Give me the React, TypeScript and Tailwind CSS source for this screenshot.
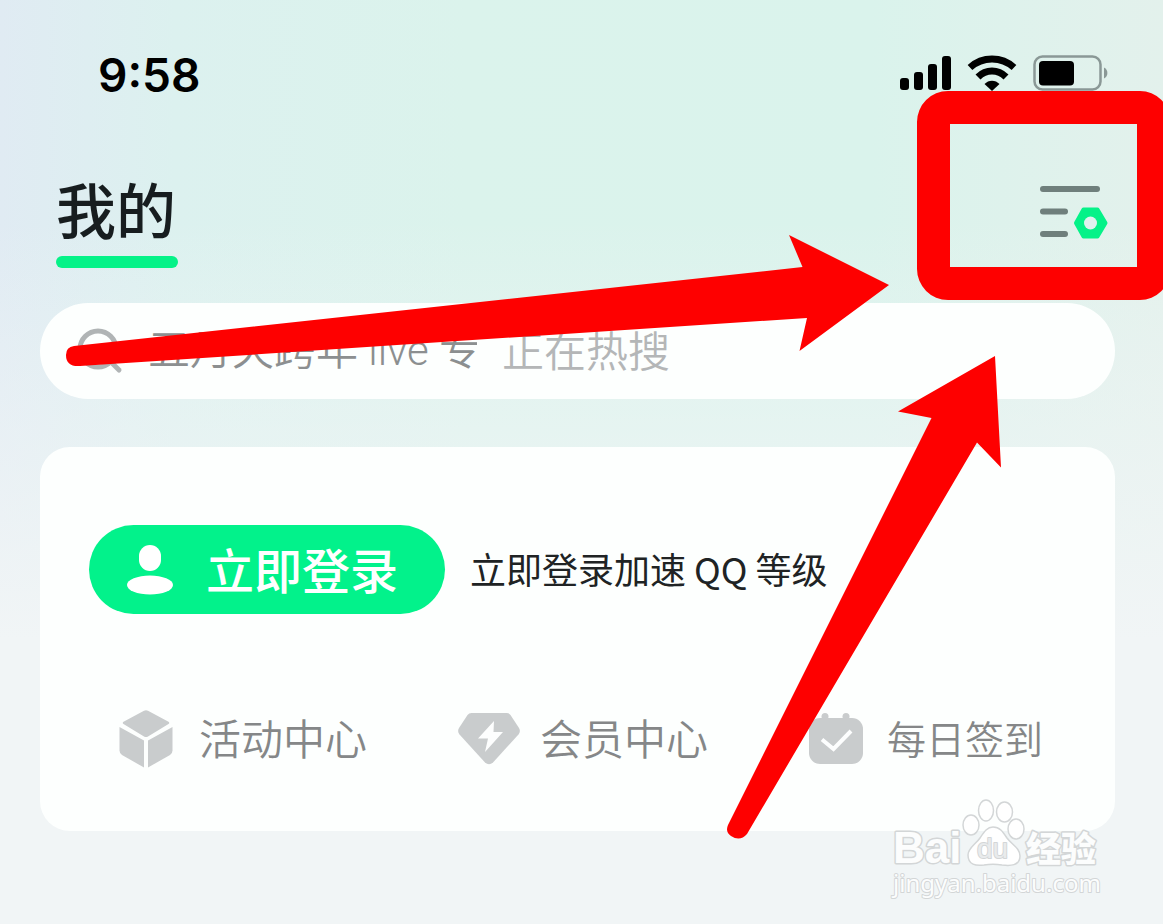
import type { ReactNode } from 'react';

type Shortcut = {
  label: string;
  icon: ReactNode;
  className: string;
};

function SignalIcon() {
  return (
    <svg viewBox="0 0 52 36" className="h-9 w-[52px]" fill="#000" aria-hidden="true">
      <rect x="1" y="23" width="9" height="12" rx="3" />
      <rect x="15" y="17" width="9" height="18" rx="3" />
      <rect x="29" y="9" width="9" height="26" rx="3" />
      <rect x="43" y="1" width="9" height="34" rx="3" />
    </svg>
  );
}

function WifiIcon() {
  return (
    <svg viewBox="0 0 50 36" className="h-9 w-[50px]" fill="none" stroke="#000" aria-hidden="true">
      <path d="M3 12.500C15.500 1.200 34.500 1.200 47 12.500" strokeWidth="7" />
      <path d="M11 22C19 14 31 14 39 22" strokeWidth="7" />
      <path d="M25 36L17.500 29C21.500 24.500 28.500 24.500 32.500 29Z" fill="#000" stroke="none" />
    </svg>
  );
}

function BatteryIcon() {
  return (
    <svg viewBox="0 0 75 36" className="h-9 w-[75px]" aria-hidden="true">
      <rect x="1.500" y="1.500" width="66" height="33" rx="8" fill="none" stroke="#8a9896" strokeWidth="2.500" />
      <rect x="6" y="6" width="35" height="24.500" rx="4" fill="#000" />
      <path d="M71 12.500C75.500 14.500 75.500 21.500 71 23.500Z" fill="#8a9896" />
    </svg>
  );
}

function SettingsIcon() {
  return (
    <svg viewBox="0 0 68 54" className="h-[54px] w-[68px]" aria-hidden="true">
      <g stroke="#6f7f7c" strokeWidth="6" strokeLinecap="round">
        <path d="M3 3H57" />
        <path d="M3 25.500H25" />
        <path d="M3 48H25" />
      </g>
      <path
        d="M43.500 23.500H57.500L65.500 37L57.500 50.500H43.500L36 37Z"
        fill="#05f288"
        stroke="#05f288"
        strokeWidth="4"
        strokeLinejoin="round"
      />
      <circle cx="50.500" cy="37" r="6.500" fill="#e0f1ef" />
    </svg>
  );
}

function SearchIcon() {
  return (
    <svg viewBox="0 0 46 46" className="h-[46px] w-[46px] shrink-0" fill="none" stroke="#b0b4b5" strokeWidth="5" strokeLinecap="round" aria-hidden="true">
      <circle cx="21" cy="21" r="18" />
      <path d="M34 34L42 42" />
    </svg>
  );
}

function UserIcon() {
  return (
    <svg viewBox="0 0 48 50" className="h-[50px] w-12 shrink-0" fill="#fff" aria-hidden="true">
      <rect x="13" y="0" width="22" height="26" rx="11" />
      <ellipse cx="24" cy="40" rx="23" ry="9.500" />
    </svg>
  );
}

function CubeIcon() {
  return (
    <svg viewBox="0 0 54 58" className="h-[58px] w-[54px] shrink-0" fill="#c9cccd" aria-hidden="true">
      <path d="M25 .8Q27 -.3 29 .8L49.500 11.800Q51 13 49.500 14L29 26.500Q27 27.600 25 26.500L4.500 14Q3 13 4.500 11.800Z" />
      <path d="M.5 17L25 30.500V57.500L3 45Q.5 43.500 .5 40.500Z" />
      <path d="M53.500 17L29 30.500V57.500L51 45Q53.500 43.500 53.500 40.500Z" />
    </svg>
  );
}

function DiamondIcon() {
  return (
    <svg viewBox="0 0 62 52" className="h-[52px] w-[62px] shrink-0" aria-hidden="true">
      <path
        d="M13.500 0H48.500Q51 0 52.500 2L61 15Q63 18.500 60.500 21.500L35 49.500Q31 53 27 49.500L1.500 21.500Q-1 18.500 1 15L9.500 2Q11 0 13.500 0Z"
        fill="#c9cccd"
      />
      <path d="M36 8L20 25.500H30L27 39L45 19H35.500Z" fill="#fdfefe" />
    </svg>
  );
}

function CalendarIcon() {
  return (
    <svg viewBox="0 0 54 52" className="h-[52px] w-[54px] shrink-0" aria-hidden="true">
      <circle cx="16" cy="3.500" r="3.500" fill="#c9cccd" />
      <circle cx="37" cy="3.500" r="3.500" fill="#c9cccd" />
      <rect y="5" width="54" height="46" rx="11" fill="#c9cccd" />
      <path d="M13 26.500L24.500 36L42 18" fill="none" stroke="#fdfefe" strokeWidth="4" />
    </svg>
  );
}

const shortcuts: Shortcut[] = [
  { label: '活动中心', icon: <CubeIcon />, className: 'gap-[26px] text-[42px]' },
  { label: '会员中心', icon: <DiamondIcon />, className: 'gap-5 text-[42px]' },
  { label: '每日签到', icon: <CalendarIcon />, className: 'gap-6 text-[39px]' },
];

// Red marker and arrows that point at the settings button
function Annotations() {
  return (
    <svg viewBox="0 0 1163 924" className="pointer-events-none absolute left-0 top-0 w-full" fill="#fe0000" aria-hidden="true">
      <path
        fillRule="evenodd"
        d="M948 91H1140A30 30 0 0 1 1170 121V270A30 30 0 0 1 1140 300H948A31 31 0 0 1 917 269V122A31 31 0 0 1 948 91ZM950 124V267H1137V124Z"
      />
      <path d="M74 346L802.500 267L789 235L889 285L799.500 351L807 318L80 366Q66 367 66 355Q66 347 74 346Z" />
      <path d="M995 356L898 411.500L931.500 418L728 825Q725 832 731 836Q740 842 747 834L977 442.500L1001 467.500Z" />
    </svg>
  );
}

function Watermark() {
  return (
    <svg viewBox="0 0 214 104" className="pointer-events-none absolute bottom-[22px] right-[59px] h-[104px] w-[214px]" role="img" aria-label="Baidu 经验">
      <g fill="#fff" stroke="#d3d6d7" strokeWidth="1.500">
        <ellipse cx="81" cy="27" rx="8" ry="10" />
        <ellipse cx="96" cy="12.500" rx="7.500" ry="10.500" />
        <ellipse cx="114.500" cy="14" rx="8" ry="10" />
        <ellipse cx="126" cy="31" rx="8" ry="10" />
        <path d="M103 29C110 29 113 34 117 40C122 47 130 50 130 58C130 68 120 68 112 67C106 66 100 66 94 67C86 68 78 67 78 57C78 50 86 46 90 40C94 34 97 29 103 29Z" />
      </g>
      <g fill="#fcfdfd" stroke="#d3d6d7" strokeWidth="3" strokeLinejoin="round" paintOrder="stroke">
        <text x="3" y="65" className="font-['Liberation_Sans',sans-serif] text-[44px] font-bold">Bai</text>
        <text x="87" y="60" fill="#e9ebec" strokeWidth="2" className="font-['Liberation_Sans',sans-serif] text-[28px]">du</text>
        <text x="136" y="64" className="font-['Noto_Sans_CJK_SC',sans-serif] text-[35px] font-black">经验</text>
        <text x="3" y="94" strokeWidth="2" className="font-['Noto_Sans',sans-serif] text-[24px]">jingyan.baidu.com</text>
      </g>
    </svg>
  );
}

export default function App() {
  return (
    <div className="relative min-h-screen overflow-hidden bg-[linear-gradient(to_bottom,transparent_0,transparent_220px,#f1f5f6_640px),linear-gradient(to_right,#e0ebf3_0,#dcf1ef_15%,#dbf3ec_40%,#daf3ec_75%,#e3f1ec_100%)] font-['Noto_Sans_CJK_SC',sans-serif]">
      {/* Status bar */}
      <div className="flex h-[99px] items-end justify-between pl-[98px] pr-[55px]">
        <time className="font-['Inter',sans-serif] text-[46px] font-semibold leading-[48px] text-black">9:58</time>
        <div className="flex gap-4 pb-2">
          <SignalIcon />
          <WifiIcon />
          <BatteryIcon />
        </div>
      </div>

      {/* Header */}
      <header className="mt-[79px] flex items-start justify-between pl-14 pr-[55px]">
        <h1 className="text-[60px] font-medium leading-[60px] text-[#171d1f]">
          我的
          <span className="mt-[18px] block h-3 w-[122px] rounded-full bg-[#05f288]" />
        </h1>
        <button type="button" aria-label="设置" className="mt-2">
          <SettingsIcon />
        </button>
      </header>

      <main className="pl-10 pr-12">
        <label className="mt-[35px] flex h-24 items-center rounded-full bg-[#fdfffe] pl-[37px] font-[350]">
          <SearchIcon />
          <input
            type="search"
            aria-label="搜索"
            placeholder="五月天跨年 live 专"
            className="ml-[25px] w-[354px] bg-transparent font-['Roboto','Noto_Sans_CJK_SC',sans-serif] text-[42px] leading-[60px] outline-none placeholder:text-[#8c8f90]"
          />
          <span className="pb-1 text-[42px] leading-[60px] text-[#b4b6b7]">正在热搜</span>
        </label>

        <section className="mt-12 rounded-[30px] bg-[#fdfffe] pb-[60px] pt-[78px]">
          <div className="flex items-center gap-[25px] pl-[49px]">
            <button type="button" className="flex h-[89px] w-[356px] items-center gap-8 rounded-full bg-[#02f28b] pl-[37px] text-[48px] font-medium leading-[60px] text-white">
              <UserIcon />
              <span className="pb-1">立即登录</span>
            </button>
            <p className="pb-1 text-[36px] leading-[60px] text-[#202324]">立即登录加速 QQ 等级</p>
          </div>
          <div className="mt-[93px] grid grid-cols-[339fr_351fr_235fr] pl-[79px] pr-[71px]">
            {shortcuts.map((s) => (
              <button
                key={s.label}
                type="button"
                className={`flex items-center whitespace-nowrap font-[350] leading-[60px] text-[#858788] ${s.className}`}
              >
                {s.icon}
                <span className="pb-1">{s.label}</span>
              </button>
            ))}
          </div>
        </section>
      </main>

      <Annotations />
      <Watermark />
    </div>
  );
}
